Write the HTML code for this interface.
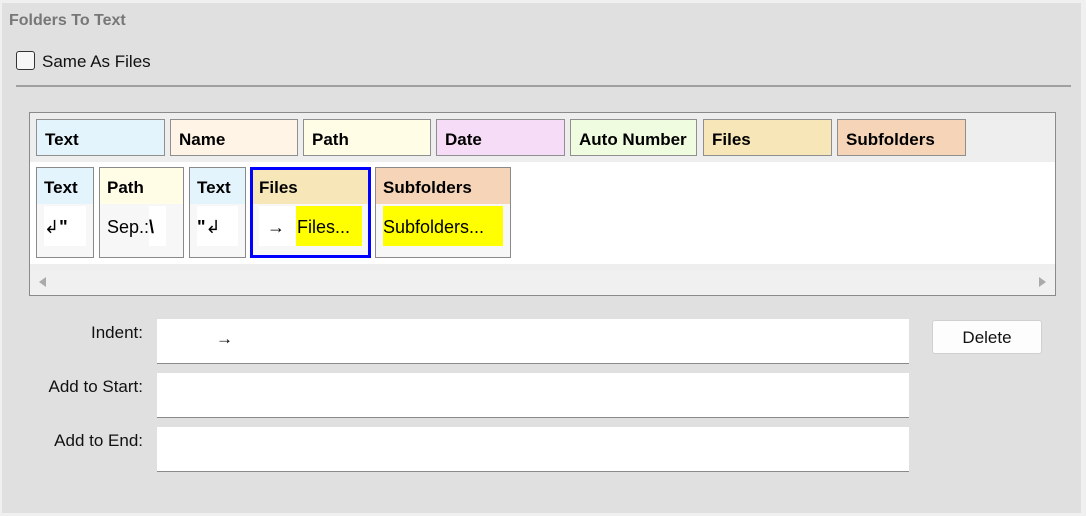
<!DOCTYPE html>
<html><head><style>
*{box-sizing:border-box;margin:0;padding:0}
body{width:1086px;height:516px;background:#f0f0f0;font-family:"Liberation Sans",sans-serif;position:relative;overflow:hidden;color:#000}
.a{position:absolute}
#main{left:2px;top:3px;width:1079px;height:510px;background:#e0e0e0}
.tile{position:absolute;top:119px;height:37px;border:1px solid #8f8f8f;font-weight:bold;font-size:17px;padding:10px 0 0 8px}
.blk{position:absolute;top:167px;height:91px;border:1px solid #8a8a8a;background:#f7f7f7}
.bh{height:36px;font-weight:bold;font-size:17px;padding:10px 0 0 7px}
.inner{position:absolute;top:38px;height:40px;background:#fff;font-size:18px;line-height:42px}
.lbl{position:absolute;font-size:17px;text-align:right;width:132px;left:11px;color:#111}
.inp{position:absolute;left:157px;width:752px;height:45px;background:#fff;border-bottom:1px solid #8a8a8a}
</style></head><body>
<div class="a" id="main"></div>
<div class="a" style="left:9px;top:12px;font-size:16px;font-weight:bold;color:#777">Folders To Text</div>
<div class="a" style="left:16px;top:51px;width:19px;height:19px;border:1px solid #333;border-radius:3px;background:#f6f6f6"></div>
<div class="a" style="left:42px;top:52px;font-size:17px;color:#111">Same As Files</div>
<div class="a" style="left:16px;top:85px;width:1055px;height:2px;background:#a0a0a0"></div>

<div class="a" style="left:29px;top:112px;width:1027px;height:184px;border:1px solid #8a8a8a;background:#eeeeee"></div>
<div class="a" style="left:30px;top:162px;width:1025px;height:102px;background:#fff"></div>
<div class="a" style="left:30px;top:270px;width:1025px;height:25px;background:#f0f0f0"></div>
<div class="a" style="left:39px;top:277px;width:0;height:0;border-top:5px solid transparent;border-bottom:5px solid transparent;border-right:7px solid #aaa"></div>
<div class="a" style="left:1039px;top:277px;width:0;height:0;border-top:5px solid transparent;border-bottom:5px solid transparent;border-left:7px solid #aaa"></div>

<div class="tile" style="left:36px;width:129px;background:#e3f4fc">Text</div>
<div class="tile" style="left:170px;width:128px;background:#fff4e6">Name</div>
<div class="tile" style="left:303px;width:128px;background:#fffde6">Path</div>
<div class="tile" style="left:436px;width:129px;background:#f7dcf8">Date</div>
<div class="tile" style="left:570px;width:127px;background:#effce0">Auto Number</div>
<div class="tile" style="left:703px;width:129px;background:#f6e6b8">Files</div>
<div class="tile" style="left:837px;width:129px;background:#f6d4b8">Subfolders</div>

<div class="blk" style="left:36px;width:58px"><div class="bh" style="background:#e3f4fc">Text</div><div class="inner" style="left:7px;width:42px"><span>↲</span><b>"</b></div></div>
<div class="blk" style="left:99px;width:85px"><div class="bh" style="background:#fffde6">Path</div><div class="inner" style="left:0;width:76px;background:transparent;padding-left:7px">Sep.:<b style="background:#fff;padding:0 12px 0 0;display:inline-block;height:40px">\</b></div></div>
<div class="blk" style="left:189px;width:57px"><div class="bh" style="background:#e3f4fc">Text</div><div class="inner" style="left:7px;width:41px"><b>"</b><span>↲</span></div></div>
<div class="blk" style="left:250px;width:121px;border:3px solid #0000ff"><div class="bh" style="background:#f6e6b8;height:34px;padding:8px 0 0 6px">Files</div><div class="inner" style="left:6px;top:36px;width:103px;padding-left:8px">→<span class="a" style="left:37px;top:0;width:66px;height:40px;background:#ffff00;padding-left:1px">Files...</span></div></div>
<div class="blk" style="left:375px;width:136px"><div class="bh" style="background:#f6d4b8">Subfolders</div><div class="inner" style="left:7px;width:120px;background:#ffff00">Subfolders...</div></div>

<div class="lbl" style="top:323px">Indent:</div>
<div class="lbl" style="top:377px">Add to Start:</div>
<div class="lbl" style="top:431px">Add to End:</div>
<div class="inp" style="top:319px"><span class="a" style="left:59px;top:10px;font-size:17px">→</span></div>
<div class="inp" style="top:373px"></div>
<div class="inp" style="top:427px"></div>
<div class="a" style="left:932px;top:320px;width:110px;height:34px;background:#fdfdfd;border:1px solid #d0d0d0;border-radius:3px;font-size:17px;text-align:center;line-height:34px;color:#111">Delete</div>
</body></html>
